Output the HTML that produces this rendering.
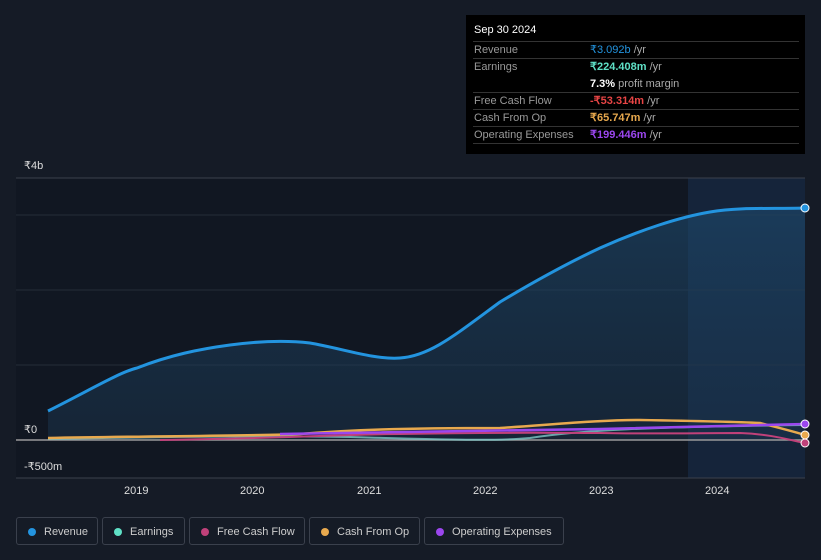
<!DOCTYPE html>
<html><head><meta charset="utf-8"><style>
body{margin:0;width:821px;height:560px;background:#151b26;font-family:"Liberation Sans",sans-serif;overflow:hidden;position:relative}
.tt{position:absolute;left:466px;top:15px;width:339px;height:139px;background:#000;color:#fff;font-size:11px}
.tt .h{position:absolute;left:8px;top:9px;font-size:11px}
.row{position:absolute;left:7px;width:326px;border-top:1px solid #333;height:17px;line-height:17px}
.row .l{position:absolute;left:1px;color:#999}
.row .v{position:absolute;left:117px;color:#aaa}
.leg{position:absolute;top:517px;height:28px;border:1px solid #3a404c;border-radius:3px;color:#ccc;font-size:11px;line-height:28px;box-sizing:border-box;padding-left:27px}
.leg i{position:absolute;left:11px;top:10px;width:8px;height:8px;border-radius:50%}
.ax{position:absolute;color:#ddd;font-size:11px}
</style></head><body>
<svg width="821" height="560" style="position:absolute;left:0;top:0">
<defs><linearGradient id="g" x1="0" y1="0" x2="0" y2="1"><stop offset="0" stop-color="#1d4a6e" stop-opacity=".6"/><stop offset="1" stop-color="#1d3a55" stop-opacity=".4"/></linearGradient></defs>
<rect x="16" y="178" width="789" height="300" fill="#111722"/>
<rect x="688" y="178" width="117" height="300" fill="#15243a"/>
<line x1="16" y1="178" x2="805" y2="178" stroke="#3a404c"/>
<line x1="16" y1="215" x2="805" y2="215" stroke="#252c38"/>
<line x1="16" y1="290" x2="805" y2="290" stroke="#252c38"/>
<line x1="16" y1="365" x2="805" y2="365" stroke="#252c38"/>
<path d="M48,411 C90,390 120,372 137,368 C170,355 200,349 230,345 C260,341 285,340 310,343 C340,348 375,360 400,358 C430,356 455,335 500,302 C540,278 570,262 600,248 C640,230 680,217 710,212 C740,207 770,209 805,208 L805,440 L48,440Z" fill="url(#g)"/>
<path d="M48,411 C90,390 120,372 137,368 C170,355 200,349 230,345 C260,341 285,340 310,343 C340,348 375,360 400,358 C430,356 455,335 500,302 C540,278 570,262 600,248 C640,230 680,217 710,212 C740,207 770,209 805,208" fill="none" stroke="#2394df" stroke-width="3"/>
<line x1="16" y1="440" x2="805" y2="440" stroke="#999" stroke-width="1.5"/>
<path d="M48,439 C200,436 300,436 350,437 C450,440 500,441 530,438 C580,430 650,427 805,425" fill="none" stroke="#7fc8c8" stroke-width="2" opacity=".8"/>
<path d="M160,440 C300,438 350,434 400,434 C500,432 560,433 600,433 C650,434 700,433 740,433 C770,434 790,440 805,443" fill="none" stroke="#c0417a" stroke-width="2"/>
<path d="M48,438 C150,436 250,436 300,434 C350,430 400,428 500,428 C560,424 600,420 640,420 C700,421 740,422 760,423 C780,428 795,432 805,435" fill="none" stroke="#e8a94e" stroke-width="2.5"/>
<path d="M280,434 C400,433 500,431 600,429 C700,426 760,425 805,424" fill="none" stroke="#9b46ee" stroke-width="2.5"/>
<line x1="16" y1="478" x2="805" y2="478" stroke="#3a404c"/>
<circle cx="805" cy="208" r="4" fill="#2394df" stroke="#fff"/>
<circle cx="805" cy="424" r="4" fill="#9b46ee" stroke="#fff"/>
<circle cx="805" cy="435" r="4" fill="#e8a94e" stroke="#fff"/>
<circle cx="805" cy="443" r="4" fill="#c0417a" stroke="#fff"/>
</svg>
<div class="ax" style="left:24px;top:159px">₹4b</div>
<div class="ax" style="left:24px;top:423px">₹0</div>
<div class="ax" style="left:24px;top:460px">-₹500m</div>
<div class="ax" style="left:124px;top:485px">2019</div>
<div class="ax" style="left:240px;top:485px">2020</div>
<div class="ax" style="left:357px;top:485px">2021</div>
<div class="ax" style="left:473px;top:485px">2022</div>
<div class="ax" style="left:589px;top:485px">2023</div>
<div class="ax" style="left:705px;top:485px">2024</div>
<div class="tt">
<div class="h">Sep 30 2024</div>
<div class="row" style="top:26px"><span class="l">Revenue</span><span class="v"><b style="color:#2394df;font-weight:normal">₹3.092b</b> /yr</span></div>
<div class="row" style="top:43px;height:34px"><span class="l">Earnings</span><span class="v"><b style="color:#5fe0c6">₹224.408m</b> /yr</span><span class="v" style="top:17px"><b style="color:#fff">7.3%</b> profit margin</span></div>
<div class="row" style="top:77px"><span class="l">Free Cash Flow</span><span class="v"><b style="color:#e84545">-₹53.314m</b> /yr</span></div>
<div class="row" style="top:94px"><span class="l">Cash From Op</span><span class="v"><b style="color:#e8a94e">₹65.747m</b> /yr</span></div>
<div class="row" style="top:111px"><span class="l">Operating Expenses</span><span class="v"><b style="color:#9b46ee">₹199.446m</b> /yr</span></div>
<div class="row" style="top:128px;height:0"></div>
</div>
<div class="leg" style="left:16px;width:82px"><i style="background:#2394df"></i>Revenue</div>
<div class="leg" style="left:102px;width:83px"><i style="background:#5fe0c6"></i>Earnings</div>
<div class="leg" style="left:189px;width:116px"><i style="background:#c0417a"></i>Free Cash Flow</div>
<div class="leg" style="left:309px;width:111px"><i style="background:#e8a94e"></i>Cash From Op</div>
<div class="leg" style="left:424px;width:140px"><i style="background:#9b46ee"></i>Operating Expenses</div>
</body></html>
